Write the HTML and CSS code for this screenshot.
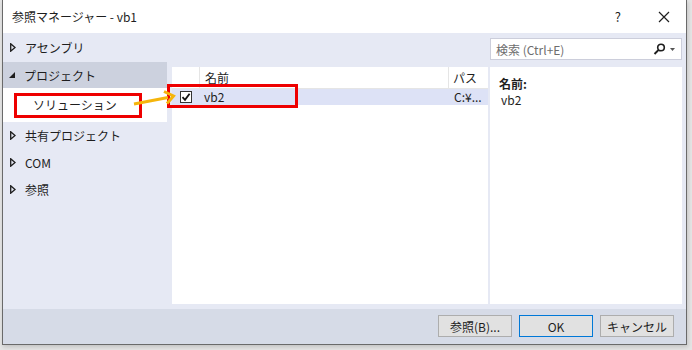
FILE: index.html
```html
<!DOCTYPE html>
<html lang="ja">
<head>
    <meta charset="UTF-8">
    <title>参照マネージャー - vb1</title>
    <link rel="stylesheet" href="styles.css">
</head>
<body>
    <div class="window">
        <div class="titlebar">
            <span class="title">参照マネージャー - vb1</span>
            <span class="help">?</span>
            <svg class="close" width="12" height="12" viewBox="0 0 12 12"><path d="M1 1L11 11M11 1L1 11" stroke="#1e1e1e" stroke-width="1.2"/></svg>
        </div>
        <div class="main">
            <div class="nav">
                <div class="nav-item first"><svg class="tri" width="6" height="9" viewBox="0 0 6 9"><path d="M0.7 0.8L5 4.5L0.7 8.2z" fill="none" stroke="#1e1e1e" stroke-width="1.3"/></svg>アセンブリ</div>
                <div class="nav-item open"><span class="tri-open"></span>プロジェクト</div>
                <div class="nav-sub">ソリューション</div>
                <div class="nav-item"><svg class="tri" width="6" height="9" viewBox="0 0 6 9"><path d="M0.7 0.8L5 4.5L0.7 8.2z" fill="none" stroke="#1e1e1e" stroke-width="1.3"/></svg>共有プロジェクト</div>
                <div class="nav-item"><svg class="tri" width="6" height="9" viewBox="0 0 6 9"><path d="M0.7 0.8L5 4.5L0.7 8.2z" fill="none" stroke="#1e1e1e" stroke-width="1.3"/></svg>COM</div>
                <div class="nav-item"><svg class="tri" width="6" height="9" viewBox="0 0 6 9"><path d="M0.7 0.8L5 4.5L0.7 8.2z" fill="none" stroke="#1e1e1e" stroke-width="1.3"/></svg>参照</div>
            </div>
            <div class="right">
                <div class="search-row">
                    <div class="search">
                        <span class="placeholder">検索 (Ctrl+E)</span>
                        <svg width="24" height="12" viewBox="0 0 24 12">
                            <circle cx="8" cy="4.5" r="3.3" fill="none" stroke="#1e1e1e" stroke-width="1.6"/>
                            <path d="M5.6 6.9L1.5 11" stroke="#1e1e1e" stroke-width="2"/>
                            <path d="M17 5h5l-2.5 3z" fill="#555"/>
                        </svg>
                    </div>
                </div>
                <div class="content">
                    <div class="list">
                        <div class="list-head">
                            <div class="col-check"></div>
                            <div class="col-name">名前</div>
                            <div class="col-path">パス</div>
                        </div>
                        <div class="list-row">
                            <div class="col-check"><span class="checkbox">
                                <svg width="10" height="10" viewBox="0 0 10 10"><path d="M1.5 5.2L4 7.8L8.6 1.8" fill="none" stroke="#111" stroke-width="1.8"/></svg>
                            </span></div>
                            <div class="col-name">vb2</div>
                            <div class="col-path">C:¥...</div>
                        </div>
                    </div>
                    <div class="details">
                        <div class="detail-label">名前:</div>
                        <div class="detail-value">vb2</div>
                    </div>
                </div>
            </div>
        </div>
        <div class="footer">
            <button class="button">参照(B)...</button>
            <button class="button ok">OK</button>
            <button class="button">キャンセル</button>
        </div>

        <div class="mark mark-sub"></div>
        <div class="mark mark-row"></div>
        <svg class="arrow" width="44" height="18" viewBox="0 0 44 18">
            <path d="M1 14L35 7.5" stroke="#f5b50c" stroke-width="3"/>
            <path d="M31 1.5L40.5 6L34 13.5" fill="none" stroke="#f5b50c" stroke-width="3"/>
        </svg>
    </div>
</body>
</html>
```

FILE: styles.css
```css
body {
    margin: 0;
    background: #e4e4e4;
    font-family: "Noto Sans CJK JP", "Noto Sans", sans-serif;
    font-size: 12px;
    color: #1e1e1e;
    width: 692px;
    height: 350px;
    overflow: hidden;
}
.window {
    position: relative;
    margin-left: 2px;
    width: 685px;
    height: 345px;
    border-left: 1px solid #6a6a6a;
    border-right: 1px solid #6a6a6a;
    border-bottom: 1px solid #6a6a6a;
    box-sizing: border-box;
    display: flex;
    flex-direction: column;
    background: #e6e9f4;
    box-shadow: 1px 2px 4px rgba(0, 0, 0, 0.15);
}
.titlebar {
    height: 33px;
    flex-shrink: 0;
    background: #ffffff;
    display: flex;
    align-items: center;
    padding-left: 9px;
}
.title {
    flex: 1;
    line-height: 1;
}
.help {
    font-size: 13px;
    margin-right: 37px;
}
.close {
    margin-right: 16px;
}
.main {
    flex: 1;
    display: flex;
}
.nav {
    width: 164px;
    margin-right: 5px;
}
.nav-item {
    height: 27px;
    display: flex;
    align-items: center;
    padding-left: 7px;
}
.nav-item.first {
    height: 29px;
}
.nav-item.open {
    height: 26px;
    background: #ccd1de;
}
.tri {
    margin-right: 9px;
}
.tri-open {
    width: 0;
    height: 0;
    border-left: 6px solid transparent;
    border-bottom: 6px solid #1e1e1e;
    margin-right: 9px;
    margin-left: -1px;
}
.nav-sub {
    height: 34px;
    background: #ffffff;
    padding-left: 30px;
    line-height: 34px;
}
.right {
    width: 510px;
    display: flex;
    flex-direction: column;
    padding-top: 5px;
    padding-bottom: 5px;
}
.search-row {
    display: flex;
    justify-content: flex-end;
}
.search {
    width: 192px;
    height: 22px;
    box-sizing: border-box;
    background: #ffffff;
    border: 1px solid #cccedb;
    display: flex;
    align-items: center;
    justify-content: space-between;
    padding: 0 4px 0 5px;
}
.placeholder {
    color: #6d6d6d;
}
.content {
    flex: 1;
    display: flex;
    gap: 2px;
    margin-top: 7px;
}
.list {
    width: 316px;
    background: #ffffff;
}
.list-head {
    height: 21px;
    display: flex;
    border-bottom: 1px solid #e5e5e5;
    line-height: 21px;
}
.list-head > div + div {
    border-left: 1px solid #e5e5e5;
}
.list-row {
    height: 16px;
    display: flex;
    background: #dde2f6;
    line-height: 16px;
}
.col-check {
    width: 27px;
    display: flex;
    align-items: center;
    justify-content: center;
}
.col-name {
    width: 249px;
    padding-left: 5px;
    box-sizing: border-box;
}
.col-path {
    flex: 1;
    padding-left: 4px;
}
.list-row .col-path {
    padding-left: 6px;
}
.checkbox {
    width: 12px;
    height: 12px;
    box-sizing: border-box;
    border: 1px solid #333;
    background: #ffffff;
    display: flex;
    align-items: center;
    justify-content: center;
}
.details {
    width: 192px;
    background: #ffffff;
    padding: 9px 0 0 9px;
    box-sizing: border-box;
}
.detail-label {
    font-weight: bold;
    line-height: 16px;
}
.detail-value {
    padding-left: 2px;
    line-height: 16px;
}
.footer {
    height: 35px;
    flex-shrink: 0;
    background: #d6dbe7;
    display: flex;
    justify-content: flex-end;
    align-items: flex-start;
    gap: 7px;
    padding: 6px 12px 0 0;
    box-sizing: border-box;
}
.button {
    width: 74px;
    height: 22px;
    background: #e1e1e1;
    border: 1px solid #adadad;
    font-family: "Noto Sans CJK JP", "Noto Sans", sans-serif;
    font-size: 12px;
    color: #1e1e1e;
    padding: 0;
}
.button.ok {
    border-color: #0078d7;
}
.mark {
    position: absolute;
    border: 3px solid #ee0000;
    box-sizing: border-box;
}
.mark-sub {
    left: 11px;
    top: 93px;
    width: 128px;
    height: 25px;
}
.mark-row {
    left: 164px;
    top: 84px;
    width: 131px;
    height: 24px;
}
.arrow {
    position: absolute;
    left: 130px;
    top: 90px;
}
```
